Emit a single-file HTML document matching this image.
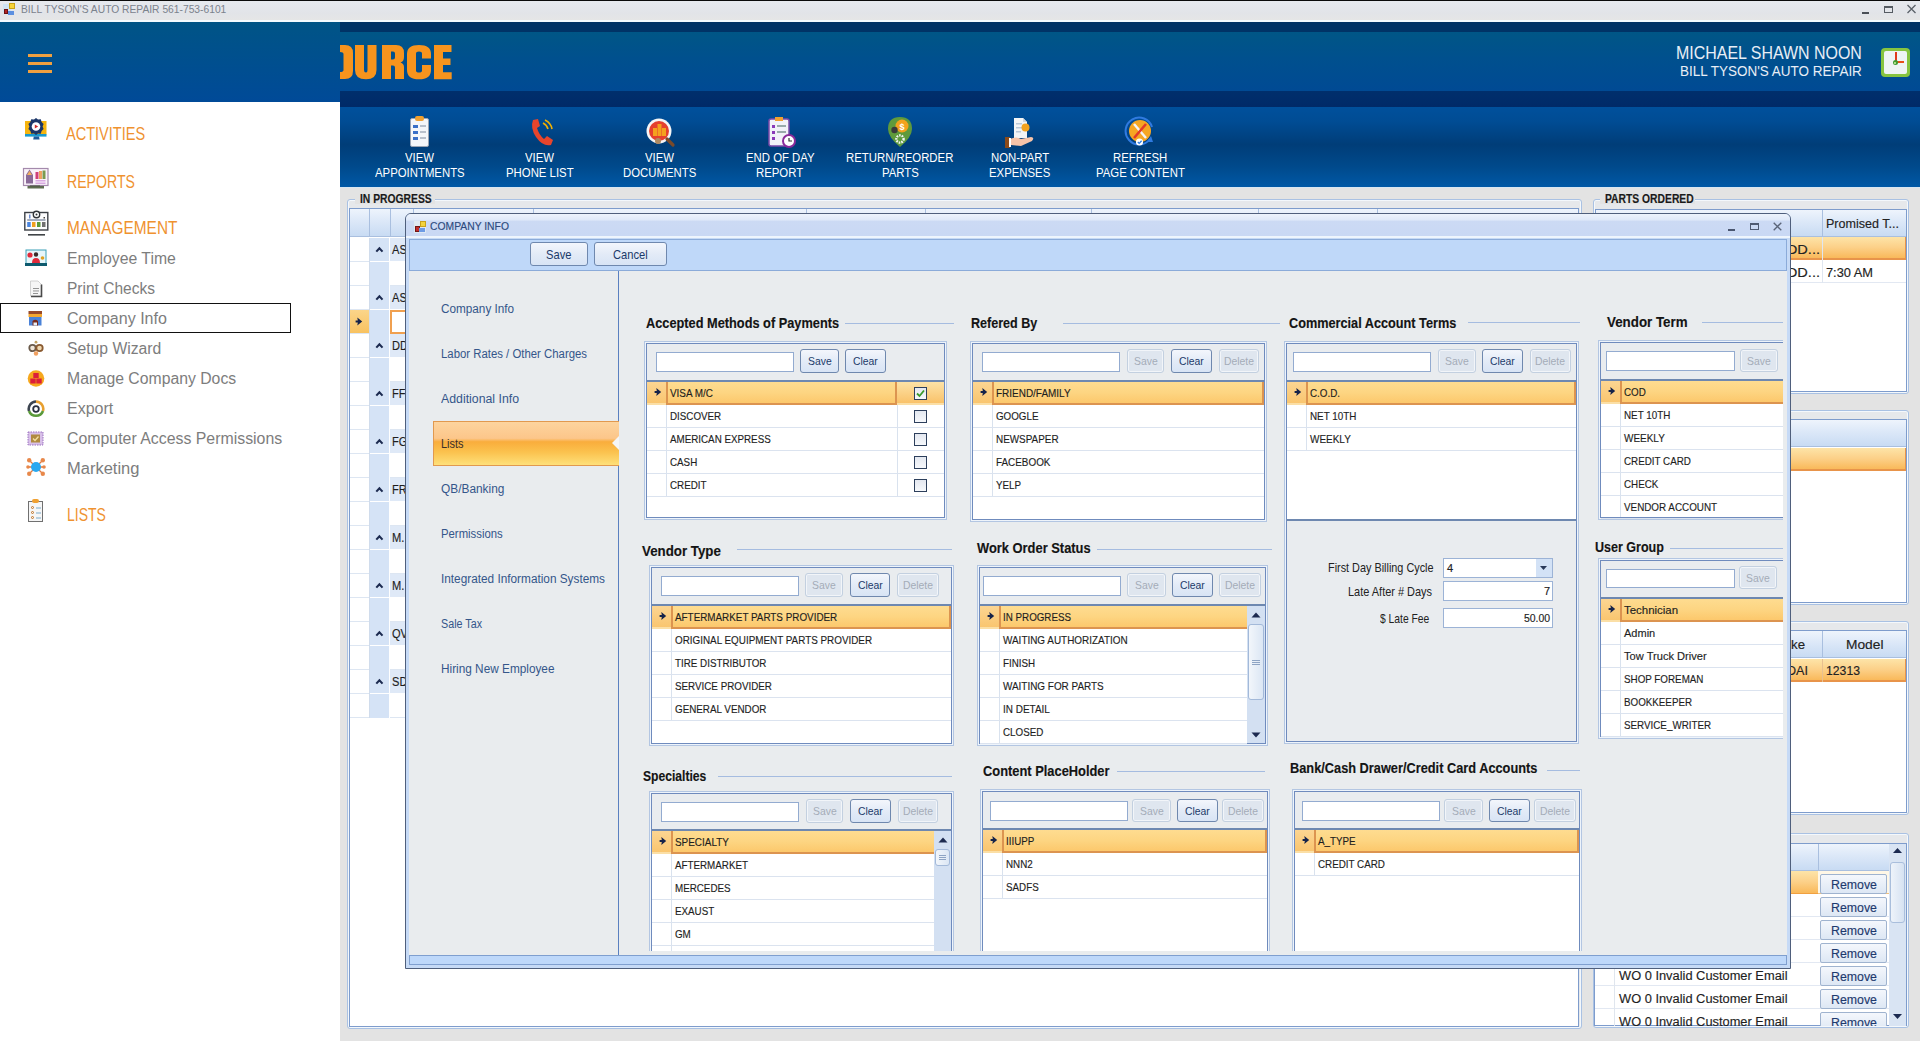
<!DOCTYPE html>
<html><head><meta charset="utf-8"><title>Company Info</title>
<style>
html,body{margin:0;padding:0;}
body{width:1920px;height:1041px;overflow:hidden;position:relative;background:#e4e4e4;font-family:"Liberation Sans",sans-serif;}
div,span,svg{position:absolute;box-sizing:border-box;}
.t{white-space:nowrap;line-height:1;-webkit-text-stroke:0.15px currentColor;}
</style></head><body>
<div style="left:0px;top:0px;width:1920px;height:1px;background:#0a0a0a"></div>
<div style="left:0px;top:1px;width:1920px;height:20px;background:linear-gradient(#e6e9ee,#e2e4e8 60%,#e6e6e6)"></div>
<div style="left:0px;top:20px;width:1920px;height:2px;background:#f4fbff"></div>
<div style="left:3px;top:4px;width:8px;height:8px;background:#cfe3f3"></div>
<div style="left:4px;top:9px;width:4px;height:5px;background:#b22222;border:1px solid #6a1010"></div>
<div style="left:9px;top:3px;width:6px;height:6px;background:#f5d33a;border:1px solid #c9a217"></div>
<div style="left:8px;top:11px;width:6px;height:4px;background:#5b8fe0"></div>
<span class="t" style="left:20.50px;top:4.10px;font-size:11.34px;color:#7b828c;transform:scaleX(0.9064);transform-origin:0 0;-webkit-text-stroke:0;">BILL TYSON&#x27;S AUTO REPAIR 561-753-6101</span>
<div style="left:1862px;top:12px;width:7px;height:2px;background:#4a4f56"></div>
<div style="left:1884px;top:6px;width:9px;height:7px;border:1px solid #555b62;border-top-width:2px"></div>
<svg style="left:1906px;top:4px" width="11" height="10" viewBox="0 0 11 10"><path d="M1.5 1 L9.5 9 M9.5 1 L1.5 9" stroke="#5a6068" stroke-width="1.3"/></svg>
<div style="left:0px;top:22px;width:340px;height:80px;background:linear-gradient(#005486,#004f8f 50%,#004a98)"></div>
<div style="left:28px;top:54px;width:24px;height:3px;background:#f0a040"></div>
<div style="left:28px;top:62px;width:24px;height:3px;background:#f0a040"></div>
<div style="left:28px;top:70px;width:24px;height:3px;background:#f0a040"></div>
<div style="left:340px;top:22px;width:1580px;height:10px;background:#003366"></div>
<div style="left:340px;top:32px;width:1580px;height:59px;background:linear-gradient(#005686,#00508e 45%,#004a94)"></div>
<div style="left:340px;top:91px;width:1580px;height:16px;background:linear-gradient(#002f6c,#002a68)"></div>
<div style="left:340px;top:107px;width:1580px;height:80px;background:linear-gradient(#00509c 0%,#004c94 18%,#003d78 47%,#004a8c 75%,#0058a6 100%)"></div>
<div style="left:340px;top:187px;width:1580px;height:1px;background:#d8e6f2"></div>
<svg style="left:340px;top:44px" width="114" height="36" viewBox="340 44 114 36"><path fill="#f7941d" fill-rule="evenodd" d="M340 45 H345 Q353 45 353 53 V71 Q353 79 345 79 H340 V72 Q343.5 72 343.5 70 V54 Q343.5 52 340 52 Z M355 45 H364 V70 Q364 72.5 366 72.5 Q367.5 72.5 367.5 70 V45 H376.5 V70 Q376.5 79.3 366 79.3 Q355 79.3 355 70 Z M382 45 H396 Q404 45 404 53 V57 Q404 61.5 400.5 62.5 Q404 63.5 404 67 V79 H395 V67.5 Q395 65.5 393 65.5 H391 V79 H382 Z M391 51.5 V59.5 H393 Q395 59.5 395 57.5 V53.5 Q395 51.5 393 51.5 Z M407 54 Q407 45 419 45 Q431 45 431 54 V58.5 H422 V53.5 Q422 51.5 419 51.5 Q416 51.5 416 53.5 V70.5 Q416 72.5 419 72.5 Q422 72.5 422 70.5 V65 H431 V70 Q431 79.3 419 79.3 Q407 79.3 407 70 Z M434 45 H451.5 V52 H443 V58.5 H450.5 V65 H443 V72.3 H451.7 V79.3 H434 Z"/></svg>
<span class="t" style="left:1676.00px;top:43.51px;font-size:18.17px;color:#e8eef6;transform:scaleX(0.8788);transform-origin:0 0;-webkit-text-stroke:0;">MICHAEL SHAWN NOON</span>
<span class="t" style="left:1680.00px;top:62.97px;font-size:15.26px;color:#e8eef6;transform:scaleX(0.8839);transform-origin:0 0;-webkit-text-stroke:0;">BILL TYSON&#x27;S AUTO REPAIR</span>
<div style="left:1881px;top:48px;width:29px;height:29px;background:#86c440;border-radius:4px"></div>
<div style="left:1884px;top:51px;width:23px;height:23px;background:#eef4f4;border-radius:2px"></div>
<div style="left:1895px;top:52px;width:2px;height:11px;background:#e03a1a"></div>
<div style="left:1896px;top:61px;width:8px;height:2px;background:#e8501a"></div>
<div style="left:1893px;top:60px;width:5px;height:5px;background:#3f9a2f;border-radius:50%"></div>
<div style="left:1894px;top:62px;width:2px;height:2px;background:#c8f0a0;border-radius:50%"></div>
<span class="t" style="left:405.48px;top:151.12px;font-size:13.08px;color:#ffffff;transform:scaleX(0.8690);transform-origin:0 0;-webkit-text-stroke:0;">VIEW</span>
<span class="t" style="left:375.16px;top:166.12px;font-size:13.08px;color:#ffffff;transform:scaleX(0.8690);transform-origin:0 0;-webkit-text-stroke:0;">APPOINTMENTS</span>
<span class="t" style="left:525.48px;top:151.12px;font-size:13.08px;color:#ffffff;transform:scaleX(0.8690);transform-origin:0 0;-webkit-text-stroke:0;">VIEW</span>
<span class="t" style="left:506.21px;top:166.12px;font-size:13.08px;color:#ffffff;transform:scaleX(0.8690);transform-origin:0 0;-webkit-text-stroke:0;">PHONE LIST</span>
<span class="t" style="left:645.48px;top:151.12px;font-size:13.08px;color:#ffffff;transform:scaleX(0.8690);transform-origin:0 0;-webkit-text-stroke:0;">VIEW</span>
<span class="t" style="left:623.37px;top:166.12px;font-size:13.08px;color:#ffffff;transform:scaleX(0.8690);transform-origin:0 0;-webkit-text-stroke:0;">DOCUMENTS</span>
<span class="t" style="left:745.69px;top:151.12px;font-size:13.08px;color:#ffffff;transform:scaleX(0.8690);transform-origin:0 0;-webkit-text-stroke:0;">END OF DAY</span>
<span class="t" style="left:756.42px;top:166.12px;font-size:13.08px;color:#ffffff;transform:scaleX(0.8690);transform-origin:0 0;-webkit-text-stroke:0;">REPORT</span>
<span class="t" style="left:846.32px;top:151.12px;font-size:13.08px;color:#ffffff;transform:scaleX(0.8690);transform-origin:0 0;-webkit-text-stroke:0;">RETURN/REORDER</span>
<span class="t" style="left:881.58px;top:166.12px;font-size:13.08px;color:#ffffff;transform:scaleX(0.8690);transform-origin:0 0;-webkit-text-stroke:0;">PARTS</span>
<span class="t" style="left:990.85px;top:151.12px;font-size:13.08px;color:#ffffff;transform:scaleX(0.8690);transform-origin:0 0;-webkit-text-stroke:0;">NON-PART</span>
<span class="t" style="left:989.36px;top:166.12px;font-size:13.08px;color:#ffffff;transform:scaleX(0.8690);transform-origin:0 0;-webkit-text-stroke:0;">EXPENSES</span>
<span class="t" style="left:1112.84px;top:151.12px;font-size:13.08px;color:#ffffff;transform:scaleX(0.8690);transform-origin:0 0;-webkit-text-stroke:0;">REFRESH</span>
<span class="t" style="left:1095.58px;top:166.12px;font-size:13.08px;color:#ffffff;transform:scaleX(0.8690);transform-origin:0 0;-webkit-text-stroke:0;">PAGE CONTENT</span>
<div style="left:410px;top:118px;width:19px;height:29px;background:#f4f6fa;border:1px solid #9aa4b4;border-radius:2px"></div>
<div style="left:415px;top:116px;width:9px;height:5px;background:#f0a030;border-radius:2px"></div>
<div style="left:413px;top:125px;width:5px;height:3px;background:#3a6fc8"></div>
<div style="left:420px;top:125px;width:6px;height:2px;background:#b8c0cc"></div>
<div style="left:413px;top:131px;width:5px;height:3px;background:#3a6fc8"></div>
<div style="left:420px;top:131px;width:6px;height:2px;background:#b8c0cc"></div>
<div style="left:413px;top:137px;width:5px;height:3px;background:#3a6fc8"></div>
<div style="left:420px;top:137px;width:6px;height:2px;background:#b8c0cc"></div>
<svg style="left:527px;top:117px" width="28" height="31" viewBox="0 0 28 31"><path d="M6 3 L11 2 L13 9 L10 11 Q12 18 17 22 L20 19 L26 23 L24 28 Q16 30 9 20 Q3 11 6 3Z" fill="#e8452c"/><path d="M16 6 Q20 8 21 12 M18 3 Q24 6 25 12" stroke="#f0b000" stroke-width="1.6" fill="none"/></svg>
<svg style="left:645px;top:116px" width="32" height="33" viewBox="0 0 32 33"><circle cx="14" cy="15" r="12.5" fill="#f6f6f6"/><circle cx="14" cy="15" r="10" fill="#e5402e"/><rect x="8" y="12" width="4" height="8" fill="#f4a21e"/><rect x="12.5" y="8" width="4" height="12" fill="#f4a21e"/><rect x="17" y="12" width="4" height="8" fill="#f4a21e"/><path d="M22 23 L28 29" stroke="#7a4a2a" stroke-width="3.2" stroke-linecap="round"/><circle cx="13" cy="25" r="3" fill="#b08a60"/></svg>
<svg style="left:766px;top:116px" width="32" height="33" viewBox="0 0 32 33"><rect x="3" y="3" width="20" height="27" rx="2" fill="#f2f2f8" stroke="#7a4aa8" stroke-width="1.5"/><rect x="9" y="1" width="8" height="4" fill="#f0a030"/><rect x="6" y="9" width="3" height="3" fill="#8a3ab8"/><rect x="11" y="9" width="9" height="2" fill="#9aa"/><rect x="6" y="15" width="3" height="3" fill="#8a3ab8"/><rect x="11" y="15" width="9" height="2" fill="#9aa"/><rect x="6" y="21" width="3" height="3" fill="#8a3ab8"/><circle cx="23" cy="25" r="6" fill="#fff" stroke="#8a2a9a" stroke-width="2"/><path d="M23 22 V25 H26" stroke="#333" stroke-width="1.2" fill="none"/></svg>
<svg style="left:887px;top:116px" width="26" height="32" viewBox="0 0 26 32"><path d="M13 1 Q25 1 25 13 Q25 21 13 31 Q1 21 1 13 Q1 1 13 1Z" fill="#5f9a3c"/><circle cx="15" cy="10" r="6.5" fill="#f2a21e"/><text x="15" y="13.5" font-size="9" font-family="Liberation Sans" font-weight="bold" fill="#fff" text-anchor="middle">$</text><circle cx="7.5" cy="14" r="3.2" fill="#3a3a3a"/><circle cx="13" cy="23" r="3.6" fill="none" stroke="#f4f4f4" stroke-width="2.4" stroke-dasharray="1.6 1"/></svg>
<svg style="left:1003px;top:116px" width="34" height="33" viewBox="0 0 34 33"><path d="M11 2 H20 L24 6 V22 H11Z" fill="#f2f4f6"/><path d="M20 2 V6 H24" fill="#cfd6dc"/><rect x="13" y="7" width="6" height="1.5" fill="#b9c8d8"/><rect x="13" y="11" width="8" height="1.5" fill="#b9c8d8"/><rect x="13" y="15" width="5" height="1.5" fill="#b9c8d8"/><circle cx="22.5" cy="11.5" r="4" fill="#f2a21e"/><path d="M7 23 Q13 20 18 23 L28 21 Q32 21.5 29 25 L18 30 L8 29Z" fill="#f6c3a8"/><rect x="2" y="21" width="5" height="11" fill="#8a4a1a"/><rect x="6" y="22" width="2" height="9" fill="#fff"/></svg>
<svg style="left:1124px;top:115px" width="32" height="33" viewBox="0 0 32 33"><path d="M26 24 A13.5 13.5 0 1 1 28 12" fill="none" stroke="#2f7ae0" stroke-width="2"/><path d="M23 27 L29 27 L27 21Z" fill="#2f7ae0"/><circle cx="16" cy="16" r="11" fill="#f6a623"/><path d="M10 9 L22 23" stroke="#f4f4f4" stroke-width="2.4"/><path d="M22 9 L10 23" stroke="#e23a2a" stroke-width="2.6"/><circle cx="15.5" cy="27" r="3.6" fill="#fff"/><path d="M13.8 27 L15.2 28.4 L17.6 25.8" stroke="#2f7ae0" stroke-width="1.3" fill="none"/></svg>
<div style="left:0px;top:102px;width:340px;height:939px;background:#ffffff"></div>
<svg style="left:20px;top:112px" width="32" height="32" viewBox="0 0 32 32"><rect x="5" y="9" width="21.5" height="13.5" fill="#f6b40e"/><rect x="5" y="22" width="21.5" height="2.6" fill="#1a9ad0"/><path d="M13.8 24.6 H19 L19.6 27.6 H13.2Z" fill="#1d5a9a"/><path d="M16 6 L18 7.5 L20.8 7.3 L21.6 10 L23.6 12 L22.6 14.5 L23.6 17 L21.6 19 L20.8 21.7 L18 21.5 L16 23 L14 21.5 L11.2 21.7 L10.4 19 L8.4 17 L9.4 14.5 L8.4 12 L10.4 10 L11.2 7.3 L14 7.5Z" fill="#1b3668"/><circle cx="16" cy="14.5" r="4.3" fill="#ffffff"/><path d="M14.8 12.4 L18.2 14.5 L14.8 16.6Z" fill="#d02a2a"/></svg>
<svg style="left:20px;top:162px" width="32" height="32" viewBox="0 0 32 32"><rect x="3.5" y="6.5" width="24.5" height="17" fill="#faf2fa" stroke="#a48aac" stroke-width="1.2"/><path d="M6 13 L9.5 7.5 L13 13 V21.5 H6Z" fill="#8a6a98"/><path d="M7 13 L9.5 9 L12 13Z" fill="#f2b060"/><rect x="15.5" y="10" width="3" height="7" fill="#d0407a"/><rect x="19" y="9" width="3" height="8" fill="#f0a060"/><rect x="22.5" y="8.5" width="3" height="8.5" fill="#7a9a50"/><rect x="15.5" y="18" width="10" height="1.5" fill="#d8a8e0"/><rect x="15.5" y="20.5" width="10" height="1.5" fill="#d8a8e0"/><rect x="7.5" y="24" width="16.5" height="2.5" fill="#5e6c50"/><rect x="10" y="23.5" width="10" height="1" fill="#4a5840"/></svg>
<svg style="left:20px;top:206px" width="32" height="32" viewBox="0 0 32 32"><rect x="4.8" y="6.5" width="23" height="17.5" fill="#fcfcfd" stroke="#3c4046" stroke-width="1.4"/><rect x="7.2" y="16" width="3.5" height="5" fill="#4a86e0"/><rect x="12" y="16" width="3.5" height="5" fill="#f0a020"/><rect x="17" y="16" width="3.5" height="5" fill="#5a9a3a"/><rect x="22" y="16" width="3.5" height="5" fill="#707070"/><rect x="7.2" y="13.5" width="18.3" height="1" fill="#506080"/><rect x="9" y="8.5" width="1.5" height="4" fill="#6a8ad0"/><rect x="23.5" y="11" width="1.5" height="1.5" fill="#404040"/><circle cx="16.5" cy="8.5" r="3.2" fill="#ffffff" stroke="#303438" stroke-width="1.4"/><circle cx="16.5" cy="8.5" r="1" fill="#303438"/><rect x="8" y="28" width="17" height="1.6" fill="#404448"/></svg>
<svg style="left:24px;top:248px" width="24" height="20" viewBox="0 0 24 20"><rect x="2" y="2" width="20" height="14" fill="#e6f6fa" stroke="#3aa0b8" stroke-width="1"/><circle cx="6" cy="7" r="2.6" fill="#e02a3a"/><circle cx="12" cy="6.5" r="2.2" fill="#3a2a2a"/><path d="M8 15 Q8 10 12 10 Q16 10 16 15Z" fill="#e02a3a"/><circle cx="18.5" cy="10" r="1.8" fill="#e0a020"/><rect x="1" y="15" width="22" height="3" fill="#0d5a6e"/></svg>
<svg style="left:28px;top:279px" width="16" height="19" viewBox="0 0 16 19"><path d="M2.5 2 H10 L13.5 5.5 V17 H2.5Z" fill="#f6f6f6" stroke="#c8c8c8" stroke-width="0.8"/><path d="M13.5 5.5 V17.5 H3" fill="none" stroke="#4a4a4a" stroke-width="1.6"/><rect x="5" y="9" width="6" height="0.9" fill="#8a8a8a"/><rect x="5" y="11.5" width="6" height="0.9" fill="#8a8a8a"/><rect x="5" y="14" width="5" height="0.9" fill="#8a8a8a"/></svg>
<svg style="left:28px;top:310px" width="15" height="17" viewBox="0 0 15 17"><rect x="0.5" y="1" width="13.5" height="3" fill="#9a4a28"/><rect x="0.5" y="4" width="13.5" height="3" fill="#f4a830"/><rect x="1" y="7" width="12.5" height="8.5" fill="#4a82d8"/><path d="M4.5 15.5 V11 Q7.25 8.5 10 11 V15.5Z" fill="#7a2a1a"/><rect x="5.5" y="12.5" width="3.5" height="3" fill="#e8f0f8"/></svg>
<svg style="left:28px;top:340px" width="16" height="17" viewBox="0 0 16 17"><circle cx="4.5" cy="8" r="3.2" fill="#f0e6d8" stroke="#6a5a4a" stroke-width="1.8"/><circle cx="11.5" cy="8" r="3.2" fill="#f0d8b0" stroke="#8a5a30" stroke-width="1.8"/><circle cx="8" cy="13.5" r="2.2" fill="#f0a060"/><circle cx="8" cy="2.2" r="1.4" fill="#c0a060"/></svg>
<svg style="left:27px;top:369px" width="18" height="19" viewBox="0 0 18 19"><circle cx="9" cy="9.5" r="8.3" fill="#f6a81e"/><rect x="6.3" y="4" width="5.4" height="5" fill="#dc1e3a"/><rect x="3.3" y="9.5" width="5.4" height="5" fill="#dc1e3a"/><rect x="9.3" y="9.5" width="5.4" height="5" fill="#dc1e3a"/></svg>
<svg style="left:27px;top:400px" width="18" height="18" viewBox="0 0 18 18"><path d="M9 1.5 A7.5 7.5 0 0 0 2 11" fill="none" stroke="#3c4450" stroke-width="2.6"/><path d="M9 1.5 A7.5 7.5 0 0 1 16 11" fill="none" stroke="#e8a030" stroke-width="2.6"/><path d="M2 11 A7.5 7.5 0 0 0 16 11" fill="none" stroke="#5a9a3a" stroke-width="2.6"/><circle cx="9" cy="9" r="2.8" fill="#fff" stroke="#2a3040" stroke-width="1.8"/></svg>
<svg style="left:27px;top:431px" width="17" height="15" viewBox="0 0 17 15"><rect x="1" y="1" width="15" height="13" fill="#d8c0e8" stroke="#9a70c0" stroke-width="1" stroke-dasharray="1.5 1"/><rect x="4" y="3.5" width="9" height="8" fill="#b08a40"/><path d="M6 7.5 L8 9.5 L11.5 5.5" stroke="#f4e0a0" stroke-width="1.3" fill="none"/></svg>
<svg style="left:26px;top:457px" width="20" height="20" viewBox="0 0 20 20"><path d="M3 3 L17 17 M17 3 L3 17 M1.5 10 H18.5" stroke="#e07a40" stroke-width="1.4"/><circle cx="3.2" cy="3.2" r="2.2" fill="#e8884a"/><circle cx="16.8" cy="3.2" r="2.2" fill="#e8884a"/><circle cx="3.2" cy="16.8" r="2.2" fill="#e8884a"/><circle cx="16.8" cy="16.8" r="2.2" fill="#e8884a"/><circle cx="2" cy="10" r="1.8" fill="#e8884a"/><circle cx="18" cy="10" r="1.8" fill="#e8884a"/><circle cx="10" cy="10" r="5" fill="#2aa8f0"/></svg>
<div style="left:28px;top:501px;width:15px;height:21px;background:#f6f6f6;border:1.5px solid #707070"></div>
<div style="left:32px;top:499px;width:7px;height:4px;background:#f0a030;border-radius:2px"></div>
<div style="left:31px;top:506px;width:3px;height:3px;border:1px solid #c07020;border-radius:50%"></div>
<div style="left:36px;top:507px;width:5px;height:2px;background:#b8d0e0"></div>
<div style="left:31px;top:511px;width:3px;height:3px;border:1px solid #c07020;border-radius:50%"></div>
<div style="left:36px;top:512px;width:5px;height:2px;background:#b8d0e0"></div>
<div style="left:31px;top:516px;width:3px;height:3px;border:1px solid #c07020;border-radius:50%"></div>
<div style="left:36px;top:517px;width:5px;height:2px;background:#b8d0e0"></div>
<span class="t" style="left:66.40px;top:126.18px;font-size:17.73px;color:#ef922f;transform:scaleX(0.8202);transform-origin:0 0;-webkit-text-stroke:0;">ACTIVITIES</span>
<span class="t" style="left:67.00px;top:173.68px;font-size:17.73px;color:#ef922f;transform:scaleX(0.7963);transform-origin:0 0;-webkit-text-stroke:0;">REPORTS</span>
<span class="t" style="left:67.00px;top:220.38px;font-size:17.73px;color:#ef922f;transform:scaleX(0.8695);transform-origin:0 0;-webkit-text-stroke:0;">MANAGEMENT</span>
<span class="t" style="left:67.10px;top:250.25px;font-size:17.30px;color:#7d7d7d;transform:scaleX(0.9144);transform-origin:0 0;-webkit-text-stroke:0;">Employee Time</span>
<span class="t" style="left:67.10px;top:280.25px;font-size:17.30px;color:#7d7d7d;transform:scaleX(0.8975);transform-origin:0 0;-webkit-text-stroke:0;">Print Checks</span>
<span class="t" style="left:67.10px;top:310.25px;font-size:17.30px;color:#7d7d7d;transform:scaleX(0.9287);transform-origin:0 0;-webkit-text-stroke:0;">Company Info</span>
<span class="t" style="left:67.10px;top:340.25px;font-size:17.30px;color:#7d7d7d;transform:scaleX(0.9093);transform-origin:0 0;-webkit-text-stroke:0;">Setup Wizard</span>
<span class="t" style="left:67.10px;top:370.25px;font-size:17.30px;color:#7d7d7d;transform:scaleX(0.9124);transform-origin:0 0;-webkit-text-stroke:0;">Manage Company Docs</span>
<span class="t" style="left:67.10px;top:400.25px;font-size:17.30px;color:#7d7d7d;transform:scaleX(0.9262);transform-origin:0 0;-webkit-text-stroke:0;">Export</span>
<span class="t" style="left:67.10px;top:430.25px;font-size:17.30px;color:#7d7d7d;transform:scaleX(0.9184);transform-origin:0 0;-webkit-text-stroke:0;">Computer Access Permissions</span>
<span class="t" style="left:67.10px;top:460.25px;font-size:17.30px;color:#7d7d7d;transform:scaleX(0.9547);transform-origin:0 0;-webkit-text-stroke:0;">Marketing</span>
<span class="t" style="left:67.00px;top:506.58px;font-size:17.73px;color:#ef922f;transform:scaleX(0.7915);transform-origin:0 0;-webkit-text-stroke:0;">LISTS</span>
<div style="left:0px;top:303px;width:291px;height:30px;border:1px solid #111"></div>
<div style="left:340px;top:188px;width:1580px;height:853px;background:#e3e3e3"></div>
<div style="left:347px;top:199px;width:1235px;height:830px;border:1px solid #a9c1e3;box-shadow:inset 0 0 0 1px #f4f8fc;border-radius:3px;background:#e6e8eb"></div>
<div style="left:355px;top:190px;width:80px;height:14px;background:#e3e3e3"></div>
<span class="t" style="left:359.50px;top:193.19px;font-size:12.00px;font-weight:bold;color:#1a1a1a;transform:scaleX(0.8600);transform-origin:0 0;">IN PROGRESS</span>
<div style="left:349px;top:208px;width:1230px;height:819px;background:#ffffff;border:1px solid #7e9ccc"></div>
<div style="left:350px;top:209px;width:1228px;height:28px;background:linear-gradient(#eef4fc,#dce8f8 45%,#c8dbf3);border-bottom:1px solid #a9bfdf"></div>
<div style="left:369px;top:209px;width:1px;height:28px;background:#a9bfdf"></div>
<div style="left:390px;top:209px;width:1px;height:28px;background:#a9bfdf"></div>
<div style="left:413px;top:209px;width:1px;height:28px;background:#a9bfdf"></div>
<div style="left:533px;top:209px;width:1px;height:28px;background:#a9bfdf"></div>
<div style="left:806px;top:209px;width:1px;height:28px;background:#a9bfdf"></div>
<div style="left:925px;top:209px;width:1px;height:28px;background:#a9bfdf"></div>
<div style="left:1091px;top:209px;width:1px;height:28px;background:#a9bfdf"></div>
<div style="left:1258px;top:209px;width:1px;height:28px;background:#a9bfdf"></div>
<div style="left:1377px;top:209px;width:1px;height:28px;background:#a9bfdf"></div>
<div style="left:350px;top:238px;width:20px;height:24px;border-bottom:1px solid #dde6f2"></div>
<div style="left:370px;top:238px;width:20px;height:48px;background:#d5e3f6;border-right:1px solid #fff"></div>
<div style="left:390px;top:238px;width:1188px;height:24px;background:#dfe9f7;border-bottom:1px solid #fff"></div>
<div style="left:350px;top:262px;width:20px;height:24px;border-bottom:1px solid #dde6f2"></div>
<div style="left:390px;top:262px;width:1188px;height:24px;border-bottom:1px solid #dde6f2"></div>
<div style="left:370px;top:261px;width:20px;height:1px;background:#ffffff"></div>
<svg style="left:375px;top:246px" width="9" height="7" viewBox="0 0 9 7"><path d="M1.3 5.6 L4.4 2.3 L7.5 5.6" stroke="#1c2a50" stroke-width="2.1" fill="none"/></svg>
<span class="t" style="left:392.00px;top:244.44px;font-size:12.30px;color:#1e1e1e;transform:scaleX(0.9000);transform-origin:0 0;">AS</span>
<div style="left:350px;top:286px;width:20px;height:24px;border-bottom:1px solid #dde6f2"></div>
<div style="left:370px;top:286px;width:20px;height:48px;background:#d5e3f6;border-right:1px solid #fff"></div>
<div style="left:390px;top:286px;width:1188px;height:24px;background:#dfe9f7;border-bottom:1px solid #fff"></div>
<div style="left:350px;top:310px;width:20px;height:24px;border-bottom:1px solid #dde6f2"></div>
<div style="left:390px;top:310px;width:1188px;height:24px;border-bottom:1px solid #dde6f2"></div>
<div style="left:370px;top:309px;width:20px;height:1px;background:#ffffff"></div>
<svg style="left:375px;top:294px" width="9" height="7" viewBox="0 0 9 7"><path d="M1.3 5.6 L4.4 2.3 L7.5 5.6" stroke="#1c2a50" stroke-width="2.1" fill="none"/></svg>
<span class="t" style="left:392.00px;top:292.44px;font-size:12.30px;color:#1e1e1e;transform:scaleX(0.9000);transform-origin:0 0;">AS</span>
<div style="left:350px;top:334px;width:20px;height:24px;border-bottom:1px solid #dde6f2"></div>
<div style="left:370px;top:334px;width:20px;height:48px;background:#d5e3f6;border-right:1px solid #fff"></div>
<div style="left:390px;top:334px;width:1188px;height:24px;background:#dfe9f7;border-bottom:1px solid #fff"></div>
<div style="left:350px;top:358px;width:20px;height:24px;border-bottom:1px solid #dde6f2"></div>
<div style="left:390px;top:358px;width:1188px;height:24px;border-bottom:1px solid #dde6f2"></div>
<div style="left:370px;top:357px;width:20px;height:1px;background:#ffffff"></div>
<svg style="left:375px;top:342px" width="9" height="7" viewBox="0 0 9 7"><path d="M1.3 5.6 L4.4 2.3 L7.5 5.6" stroke="#1c2a50" stroke-width="2.1" fill="none"/></svg>
<span class="t" style="left:392.00px;top:340.44px;font-size:12.30px;color:#1e1e1e;transform:scaleX(0.9000);transform-origin:0 0;">DD</span>
<div style="left:350px;top:382px;width:20px;height:24px;border-bottom:1px solid #dde6f2"></div>
<div style="left:370px;top:382px;width:20px;height:48px;background:#d5e3f6;border-right:1px solid #fff"></div>
<div style="left:390px;top:382px;width:1188px;height:24px;background:#dfe9f7;border-bottom:1px solid #fff"></div>
<div style="left:350px;top:406px;width:20px;height:24px;border-bottom:1px solid #dde6f2"></div>
<div style="left:390px;top:406px;width:1188px;height:24px;border-bottom:1px solid #dde6f2"></div>
<div style="left:370px;top:405px;width:20px;height:1px;background:#ffffff"></div>
<svg style="left:375px;top:390px" width="9" height="7" viewBox="0 0 9 7"><path d="M1.3 5.6 L4.4 2.3 L7.5 5.6" stroke="#1c2a50" stroke-width="2.1" fill="none"/></svg>
<span class="t" style="left:392.00px;top:388.44px;font-size:12.30px;color:#1e1e1e;transform:scaleX(0.9000);transform-origin:0 0;">FF</span>
<div style="left:350px;top:430px;width:20px;height:24px;border-bottom:1px solid #dde6f2"></div>
<div style="left:370px;top:430px;width:20px;height:48px;background:#d5e3f6;border-right:1px solid #fff"></div>
<div style="left:390px;top:430px;width:1188px;height:24px;background:#dfe9f7;border-bottom:1px solid #fff"></div>
<div style="left:350px;top:454px;width:20px;height:24px;border-bottom:1px solid #dde6f2"></div>
<div style="left:390px;top:454px;width:1188px;height:24px;border-bottom:1px solid #dde6f2"></div>
<div style="left:370px;top:453px;width:20px;height:1px;background:#ffffff"></div>
<svg style="left:375px;top:438px" width="9" height="7" viewBox="0 0 9 7"><path d="M1.3 5.6 L4.4 2.3 L7.5 5.6" stroke="#1c2a50" stroke-width="2.1" fill="none"/></svg>
<span class="t" style="left:392.00px;top:436.44px;font-size:12.30px;color:#1e1e1e;transform:scaleX(0.9000);transform-origin:0 0;">FG</span>
<div style="left:350px;top:478px;width:20px;height:24px;border-bottom:1px solid #dde6f2"></div>
<div style="left:370px;top:478px;width:20px;height:48px;background:#d5e3f6;border-right:1px solid #fff"></div>
<div style="left:390px;top:478px;width:1188px;height:24px;background:#dfe9f7;border-bottom:1px solid #fff"></div>
<div style="left:350px;top:502px;width:20px;height:24px;border-bottom:1px solid #dde6f2"></div>
<div style="left:390px;top:502px;width:1188px;height:24px;border-bottom:1px solid #dde6f2"></div>
<div style="left:370px;top:501px;width:20px;height:1px;background:#ffffff"></div>
<svg style="left:375px;top:486px" width="9" height="7" viewBox="0 0 9 7"><path d="M1.3 5.6 L4.4 2.3 L7.5 5.6" stroke="#1c2a50" stroke-width="2.1" fill="none"/></svg>
<span class="t" style="left:392.00px;top:484.44px;font-size:12.30px;color:#1e1e1e;transform:scaleX(0.9000);transform-origin:0 0;">FR</span>
<div style="left:350px;top:526px;width:20px;height:24px;border-bottom:1px solid #dde6f2"></div>
<div style="left:370px;top:526px;width:20px;height:48px;background:#d5e3f6;border-right:1px solid #fff"></div>
<div style="left:390px;top:526px;width:1188px;height:24px;background:#dfe9f7;border-bottom:1px solid #fff"></div>
<div style="left:350px;top:550px;width:20px;height:24px;border-bottom:1px solid #dde6f2"></div>
<div style="left:390px;top:550px;width:1188px;height:24px;border-bottom:1px solid #dde6f2"></div>
<div style="left:370px;top:549px;width:20px;height:1px;background:#ffffff"></div>
<svg style="left:375px;top:534px" width="9" height="7" viewBox="0 0 9 7"><path d="M1.3 5.6 L4.4 2.3 L7.5 5.6" stroke="#1c2a50" stroke-width="2.1" fill="none"/></svg>
<span class="t" style="left:392.00px;top:532.44px;font-size:12.30px;color:#1e1e1e;transform:scaleX(0.9000);transform-origin:0 0;">M.</span>
<div style="left:350px;top:574px;width:20px;height:24px;border-bottom:1px solid #dde6f2"></div>
<div style="left:370px;top:574px;width:20px;height:48px;background:#d5e3f6;border-right:1px solid #fff"></div>
<div style="left:390px;top:574px;width:1188px;height:24px;background:#dfe9f7;border-bottom:1px solid #fff"></div>
<div style="left:350px;top:598px;width:20px;height:24px;border-bottom:1px solid #dde6f2"></div>
<div style="left:390px;top:598px;width:1188px;height:24px;border-bottom:1px solid #dde6f2"></div>
<div style="left:370px;top:597px;width:20px;height:1px;background:#ffffff"></div>
<svg style="left:375px;top:582px" width="9" height="7" viewBox="0 0 9 7"><path d="M1.3 5.6 L4.4 2.3 L7.5 5.6" stroke="#1c2a50" stroke-width="2.1" fill="none"/></svg>
<span class="t" style="left:392.00px;top:580.44px;font-size:12.30px;color:#1e1e1e;transform:scaleX(0.9000);transform-origin:0 0;">M.</span>
<div style="left:350px;top:622px;width:20px;height:24px;border-bottom:1px solid #dde6f2"></div>
<div style="left:370px;top:622px;width:20px;height:48px;background:#d5e3f6;border-right:1px solid #fff"></div>
<div style="left:390px;top:622px;width:1188px;height:24px;background:#dfe9f7;border-bottom:1px solid #fff"></div>
<div style="left:350px;top:646px;width:20px;height:24px;border-bottom:1px solid #dde6f2"></div>
<div style="left:390px;top:646px;width:1188px;height:24px;border-bottom:1px solid #dde6f2"></div>
<div style="left:370px;top:645px;width:20px;height:1px;background:#ffffff"></div>
<svg style="left:375px;top:630px" width="9" height="7" viewBox="0 0 9 7"><path d="M1.3 5.6 L4.4 2.3 L7.5 5.6" stroke="#1c2a50" stroke-width="2.1" fill="none"/></svg>
<span class="t" style="left:392.00px;top:628.44px;font-size:12.30px;color:#1e1e1e;transform:scaleX(0.9000);transform-origin:0 0;">QV</span>
<div style="left:350px;top:670px;width:20px;height:24px;border-bottom:1px solid #dde6f2"></div>
<div style="left:370px;top:670px;width:20px;height:48px;background:#d5e3f6;border-right:1px solid #fff"></div>
<div style="left:390px;top:670px;width:1188px;height:24px;background:#dfe9f7;border-bottom:1px solid #fff"></div>
<div style="left:350px;top:694px;width:20px;height:24px;border-bottom:1px solid #dde6f2"></div>
<div style="left:390px;top:694px;width:1188px;height:24px;border-bottom:1px solid #dde6f2"></div>
<div style="left:370px;top:693px;width:20px;height:1px;background:#ffffff"></div>
<svg style="left:375px;top:678px" width="9" height="7" viewBox="0 0 9 7"><path d="M1.3 5.6 L4.4 2.3 L7.5 5.6" stroke="#1c2a50" stroke-width="2.1" fill="none"/></svg>
<span class="t" style="left:392.00px;top:676.44px;font-size:12.30px;color:#1e1e1e;transform:scaleX(0.9000);transform-origin:0 0;">SD</span>
<div style="left:369px;top:238px;width:1px;height:480px;background:#d0dcec"></div>
<div style="left:350px;top:310px;width:19px;height:23px;background:linear-gradient(#fbd58a,#f8c260)"></div>
<svg style="left:354px;top:316px" width="11" height="11" viewBox="0 0 11 11"><path d="M1.6 4.5 H3.8 L3.3 1.5 L8.2 5.5 L3.3 9.5 L3.8 6.5 H1.6 Z" fill="#15234a"/></svg>
<div style="left:390px;top:310px;width:20px;height:24px;border:2px solid #f0a050;background:#fff"></div>
<div style="left:1593px;top:199px;width:316px;height:195px;border:1px solid #a9c1e3;box-shadow:inset 0 0 0 1px #f4f8fc;border-radius:3px;background:#e6e8eb"></div>
<div style="left:1595px;top:209px;width:312px;height:183px;background:#fff;border:1px solid #7e9ccc"></div>
<div style="left:1596px;top:210px;width:310px;height:27px;background:linear-gradient(#eef4fc,#dce8f8 45%,#c8dbf3);border-bottom:1px solid #a9bfdf"></div>
<div style="left:1822px;top:210px;width:1px;height:27px;background:#a9bfdf"></div>
<div style="left:1596px;top:237px;width:310px;height:23px;background:linear-gradient(#fde4a8,#fcd088 50%,#f9b95a);border-bottom:2px solid #e8944a;border-right:1px solid #e8944a"></div>
<div style="left:1600px;top:190px;width:95px;height:14px;background:#e3e3e3"></div>
<span class="t" style="left:1604.50px;top:193.19px;font-size:12.00px;font-weight:bold;color:#1a1a1a;transform:scaleX(0.8600);transform-origin:0 0;">PARTS ORDERED</span>
<div style="left:1596px;top:260px;width:310px;height:23px;border-bottom:1px solid #e2e8f2"></div>
<div style="left:1822px;top:237px;width:1px;height:46px;background:#dfe6f0"></div>
<span class="t" style="left:1826.00px;top:217.47px;font-size:13.37px;color:#222;transform:scaleX(0.9387);transform-origin:0 0;">Promised  T...</span>
<span class="t" style="left:1826.00px;top:265.82px;font-size:13.08px;color:#222;transform:scaleX(0.9793);transform-origin:0 0;">7:30 AM</span>
<span class="t" style="left:1786.00px;top:242.82px;font-size:13.08px;color:#222;transform:scaleX(1.1138);transform-origin:0 0;">OD...</span>
<span class="t" style="left:1786.00px;top:265.82px;font-size:13.08px;color:#222;transform:scaleX(1.1138);transform-origin:0 0;">OD...</span>
<div style="left:1593px;top:410px;width:316px;height:195px;border:1px solid #a9c1e3;box-shadow:inset 0 0 0 1px #f4f8fc;border-radius:3px;background:#e6e8eb"></div>
<div style="left:1595px;top:419px;width:312px;height:184px;background:#fff;border:1px solid #7e9ccc"></div>
<div style="left:1596px;top:420px;width:310px;height:27px;background:linear-gradient(#eef4fc,#dce8f8 45%,#c8dbf3);border-bottom:1px solid #a9bfdf"></div>
<div style="left:1596px;top:448px;width:310px;height:23px;background:linear-gradient(#fde4a8,#fcd088 50%,#f9b95a);border-bottom:2px solid #e8944a;border-right:1px solid #e8944a"></div>
<div style="left:1593px;top:621px;width:316px;height:194px;border:1px solid #a9c1e3;box-shadow:inset 0 0 0 1px #f4f8fc;border-radius:3px;background:#e6e8eb"></div>
<div style="left:1595px;top:630px;width:312px;height:183px;background:#fff;border:1px solid #7e9ccc"></div>
<div style="left:1596px;top:631px;width:310px;height:27px;background:linear-gradient(#eef4fc,#dce8f8 45%,#c8dbf3);border-bottom:1px solid #a9bfdf"></div>
<div style="left:1822px;top:631px;width:1px;height:27px;background:#a9bfdf"></div>
<div style="left:1596px;top:659px;width:310px;height:23px;background:linear-gradient(#fde4a8,#fcd088 50%,#f9b95a);border-bottom:2px solid #e8944a;border-right:1px solid #e8944a"></div>
<div style="left:1822px;top:659px;width:1px;height:23px;background:#e8c090"></div>
<span class="t" style="left:1846.00px;top:638.25px;font-size:13.52px;color:#222;transform:scaleX(1.0186);transform-origin:0 0;">Model</span>
<span class="t" style="left:1791.00px;top:638.25px;font-size:13.52px;color:#222;transform:scaleX(0.9806);transform-origin:0 0;">ke</span>
<span class="t" style="left:1787.00px;top:664.32px;font-size:13.08px;color:#222;transform:scaleX(0.9630);transform-origin:0 0;">DAI</span>
<span class="t" style="left:1826.40px;top:664.32px;font-size:13.08px;color:#222;transform:scaleX(0.9347);transform-origin:0 0;">12313</span>
<div style="left:1593px;top:833px;width:316px;height:195px;border:1px solid #a9c1e3;box-shadow:inset 0 0 0 1px #f4f8fc;border-radius:3px;background:#e6e8eb"></div>
<div style="left:1594px;top:843px;width:313px;height:183px;background:#fff;border:1px solid #7e9ccc"></div>
<div style="left:1595px;top:844px;width:294px;height:27px;background:linear-gradient(#eef4fc,#dce8f8 45%,#c8dbf3);border-bottom:1px solid #a9bfdf"></div>
<div style="left:1818px;top:844px;width:1px;height:27px;background:#a9bfdf"></div>
<div style="left:0;top:0;width:1920px;height:1041px;clip-path:inset(844px 14px 15px 1594px)">
<div style="left:1595px;top:871px;width:223px;height:23px;background:linear-gradient(#fde4a8,#fcd088 50%,#f9b95a);border-bottom:1px solid #f0a040"></div>
<div style="left:1818px;top:871px;width:71px;height:23px;background:#fff7e6;border-bottom:1px solid #f0c080"></div>
<div style="left:1820px;top:874px;width:67px;height:20px;background:linear-gradient(#f4f7fc,#dde7f4);border:1px solid #9fb3cf;border-radius:2px"></div>
<span class="t" style="left:1830.50px;top:878.12px;font-size:13.08px;color:#1e3a6e;transform:scaleX(0.9444);transform-origin:0 0;">Remove</span>
<div style="left:1595px;top:916px;width:294px;height:1px;background:#e2e8f2"></div>
<div style="left:1820px;top:897px;width:67px;height:20px;background:linear-gradient(#f4f7fc,#dde7f4);border:1px solid #9fb3cf;border-radius:2px"></div>
<span class="t" style="left:1830.50px;top:901.12px;font-size:13.08px;color:#1e3a6e;transform:scaleX(0.9444);transform-origin:0 0;">Remove</span>
<div style="left:1595px;top:939px;width:294px;height:1px;background:#e2e8f2"></div>
<div style="left:1820px;top:920px;width:67px;height:20px;background:linear-gradient(#f4f7fc,#dde7f4);border:1px solid #9fb3cf;border-radius:2px"></div>
<span class="t" style="left:1830.50px;top:924.12px;font-size:13.08px;color:#1e3a6e;transform:scaleX(0.9444);transform-origin:0 0;">Remove</span>
<div style="left:1595px;top:962px;width:294px;height:1px;background:#e2e8f2"></div>
<div style="left:1820px;top:943px;width:67px;height:20px;background:linear-gradient(#f4f7fc,#dde7f4);border:1px solid #9fb3cf;border-radius:2px"></div>
<span class="t" style="left:1830.50px;top:947.12px;font-size:13.08px;color:#1e3a6e;transform:scaleX(0.9444);transform-origin:0 0;">Remove</span>
<div style="left:1595px;top:985px;width:294px;height:1px;background:#e2e8f2"></div>
<div style="left:1820px;top:966px;width:67px;height:20px;background:linear-gradient(#f4f7fc,#dde7f4);border:1px solid #9fb3cf;border-radius:2px"></div>
<span class="t" style="left:1830.50px;top:970.12px;font-size:13.08px;color:#1e3a6e;transform:scaleX(0.9444);transform-origin:0 0;">Remove</span>
<span class="t" style="left:1619.30px;top:969.15px;font-size:13.52px;color:#1e1e1e;transform:scaleX(0.9505);transform-origin:0 0;">WO 0 Invalid Customer Email</span>
<div style="left:1595px;top:1008px;width:294px;height:1px;background:#e2e8f2"></div>
<div style="left:1820px;top:989px;width:67px;height:20px;background:linear-gradient(#f4f7fc,#dde7f4);border:1px solid #9fb3cf;border-radius:2px"></div>
<span class="t" style="left:1830.50px;top:993.12px;font-size:13.08px;color:#1e3a6e;transform:scaleX(0.9444);transform-origin:0 0;">Remove</span>
<span class="t" style="left:1619.30px;top:992.15px;font-size:13.52px;color:#1e1e1e;transform:scaleX(0.9505);transform-origin:0 0;">WO 0 Invalid Customer Email</span>
<div style="left:1595px;top:1031px;width:294px;height:1px;background:#e2e8f2"></div>
<div style="left:1820px;top:1012px;width:67px;height:20px;background:linear-gradient(#f4f7fc,#dde7f4);border:1px solid #9fb3cf;border-radius:2px"></div>
<span class="t" style="left:1830.50px;top:1016.12px;font-size:13.08px;color:#1e3a6e;transform:scaleX(0.9444);transform-origin:0 0;">Remove</span>
<span class="t" style="left:1619.30px;top:1015.15px;font-size:13.52px;color:#1e1e1e;transform:scaleX(0.9505);transform-origin:0 0;">WO 0 Invalid Customer Email</span>
<div style="left:1614px;top:871px;width:1px;height:155px;background:#e0e6ee"></div>
</div>
<div style="left:1889px;top:844px;width:17px;height:182px;background:#d9e4f3"></div>
<svg style="left:1892px;top:847px" width="11" height="7" viewBox="0 0 11 7"><path d="M1 6 L5.5 1 L10 6Z" fill="#1c2a50"/></svg>
<svg style="left:1892px;top:1013px" width="11" height="7" viewBox="0 0 11 7"><path d="M1 1 L5.5 6 L10 1Z" fill="#1c2a50"/></svg>
<div style="left:1890px;top:862px;width:15px;height:61px;background:linear-gradient(90deg,#eef3fa,#d6e2f2);border:1px solid #a9bedc;border-radius:3px"></div>
<div style="left:405px;top:213px;width:1386px;height:756px;background:#c6daf6;border:1px solid #4f5f7c;border-radius:6px 6px 0 0"></div>
<div style="left:406px;top:214px;width:1384px;height:24px;background:linear-gradient(#edf3fc 0%,#dfe9f9 25%,#ccdaf4 30%,#c9d8f4 90%,#dae6f8 100%);border-radius:5px 5px 0 0"></div>
<div style="left:406px;top:236px;width:1384px;height:2px;background:#eef5fd"></div>
<div style="left:414px;top:221px;width:12px;height:12px;background:#dfe9f3"></div>
<div style="left:415px;top:226px;width:5px;height:6px;background:#c22a2a;border:1px solid #701818"></div>
<div style="left:420px;top:221px;width:6px;height:6px;background:#f3d33c;border:1px solid #c9a11a"></div>
<div style="left:419px;top:228px;width:6px;height:4px;background:#6d9be4"></div>
<span class="t" style="left:430.00px;top:221.40px;font-size:11.34px;color:#2c4a7e;transform:scaleX(0.9132);transform-origin:0 0;">COMPANY INFO</span>
<div style="left:1728px;top:229px;width:7px;height:2px;background:#4a5670"></div>
<div style="left:1750px;top:223px;width:9px;height:7px;border:1px solid #4f5a72;border-top-width:2px"></div>
<svg style="left:1773px;top:222px" width="9" height="9" viewBox="0 0 9 9"><path d="M0.7 0.7 L8.3 8.3 M8.3 0.7 L0.7 8.3" stroke="#5a6478" stroke-width="1.3"/></svg>
<div style="left:409px;top:239px;width:1378px;height:32px;background:#bfd8f9;border:1px solid #8babd9"></div>
<div style="left:530px;top:242px;width:58px;height:24px;background:linear-gradient(#f3f6fc,#e3ebf7 50%,#d8e4f5);border:1px solid #6f88ae;border-radius:3px;"></div>
<span class="t" style="left:546.28px;top:248.93px;font-size:12.40px;color:#1b3a6a;transform:scaleX(0.9000);transform-origin:0 0;-webkit-text-stroke:0;">Save</span>
<div style="left:594px;top:242px;width:73px;height:24px;background:linear-gradient(#f3f6fc,#e3ebf7 50%,#d8e4f5);border:1px solid #6f88ae;border-radius:3px;"></div>
<span class="t" style="left:613.13px;top:248.93px;font-size:12.40px;color:#1b3a6a;transform:scaleX(0.9000);transform-origin:0 0;-webkit-text-stroke:0;">Cancel</span>
<div style="left:409px;top:271px;width:1378px;height:684px;background:#e9ecee"></div>
<div style="left:409px;top:955px;width:1378px;height:10px;background:#bed8fa;border:1px solid #7f9fcf"></div>
<div style="left:618px;top:271px;width:1px;height:684px;background:#5a80c0"></div>
<div style="left:433px;top:421px;width:186px;height:45px;background:linear-gradient(#fdd49e 0%,#fcc68a 38%,#f9ad3c 46%,#fbc24e 70%,#fee07a 100%);border:1px solid #e1994f;border-right:0"></div>
<svg style="left:612px;top:436px" width="7" height="14" viewBox="0 0 7 14"><path d="M7 0 L0 7 L7 14Z" fill="#f4f6f8"/></svg>
<span class="t" style="left:440.50px;top:303.21px;font-size:12.50px;color:#34568a;transform:scaleX(0.9393);transform-origin:0 0;-webkit-text-stroke:0;">Company Info</span>
<span class="t" style="left:440.50px;top:348.21px;font-size:12.50px;color:#34568a;transform:scaleX(0.9097);transform-origin:0 0;-webkit-text-stroke:0;">Labor Rates / Other Charges</span>
<span class="t" style="left:440.50px;top:393.21px;font-size:12.50px;color:#34568a;transform:scaleX(0.9845);transform-origin:0 0;-webkit-text-stroke:0;">Additional Info</span>
<span class="t" style="left:440.50px;top:438.11px;font-size:12.50px;color:#3a2e2a;transform:scaleX(0.8793);transform-origin:0 0;-webkit-text-stroke:0;">Lists</span>
<span class="t" style="left:440.50px;top:482.91px;font-size:12.50px;color:#34568a;transform:scaleX(0.9504);transform-origin:0 0;-webkit-text-stroke:0;">QB/Banking</span>
<span class="t" style="left:440.50px;top:527.71px;font-size:12.50px;color:#34568a;transform:scaleX(0.9064);transform-origin:0 0;-webkit-text-stroke:0;">Permissions</span>
<span class="t" style="left:440.50px;top:572.71px;font-size:12.50px;color:#34568a;transform:scaleX(0.9442);transform-origin:0 0;-webkit-text-stroke:0;">Integrated Information Systems</span>
<span class="t" style="left:440.50px;top:617.51px;font-size:12.50px;color:#34568a;transform:scaleX(0.8592);transform-origin:0 0;-webkit-text-stroke:0;">Sale Tax</span>
<span class="t" style="left:440.50px;top:662.61px;font-size:12.50px;color:#34568a;transform:scaleX(0.9444);transform-origin:0 0;-webkit-text-stroke:0;">Hiring New Employee</span>
<div style="left:0;top:0;width:1920px;height:1041px;clip-path:inset(271px 137px 90px 619px)">
<span class="t" style="left:645.70px;top:315.79px;font-size:14.53px;font-weight:bold;color:#141414;transform:scaleX(0.8799);transform-origin:0 0;">Accepted Methods of Payments</span>
<div style="left:845px;top:323px;width:109px;height:1px;background:#a5bce0"></div>
<div style="left:644px;top:341px;width:303px;height:179px;border:1px solid #b3c6e2;background:#eef4fb"></div>
<div style="left:646px;top:343px;width:299px;height:175px;border:1px solid #6f8bbd;background:#e9ecef"></div>
<div style="left:656px;top:352px;width:138px;height:20px;background:#fff;border:1px solid #93abd0"></div>
<div style="left:800px;top:349px;width:39px;height:24px;background:linear-gradient(#f3f6fc,#e3ebf7 50%,#d8e4f5);border:1px solid #6f88ae;border-radius:3px;"></div>
<span class="t" style="left:807.65px;top:356.10px;font-size:11.30px;color:#1b3a6a;transform:scaleX(0.9200);transform-origin:0 0;-webkit-text-stroke:0;">Save</span>
<div style="left:845px;top:349px;width:41px;height:24px;background:linear-gradient(#f3f6fc,#e3ebf7 50%,#d8e4f5);border:1px solid #6f88ae;border-radius:3px;"></div>
<span class="t" style="left:853.08px;top:356.10px;font-size:11.30px;color:#1b3a6a;transform:scaleX(0.9200);transform-origin:0 0;-webkit-text-stroke:0;">Clear</span>
<div style="left:647px;top:380px;width:297px;height:137px;background:#fff"></div>
<div style="left:647px;top:380px;width:297px;height:2px;background:#6e88b0"></div>
<div style="left:666px;top:382px;width:1px;height:115px;background:#d9e2ee"></div>
<div style="left:897px;top:382px;width:1px;height:115px;background:#d9e2ee"></div>
<div style="left:647px;top:382px;width:19px;height:23px;background:linear-gradient(#fcd592,#f9c46c)"></div>
<div style="left:647px;top:403px;width:19px;height:2px;background:#fbdfa6"></div>
<div style="left:666px;top:382px;width:231px;height:23px;background:linear-gradient(#fedc90,#fdd582 50%,#fcc86c);border-left:2px solid #dc9450;border-bottom:2px solid #dc9450;border-right:2px solid #dc9450"></div>
<div style="left:897px;top:382px;width:47px;height:23px;background:linear-gradient(#fde2a6,#f9c26a);border-bottom:2px solid #fbdfa6"></div>
<svg style="left:654px;top:388px" width="9" height="10" viewBox="0 0 9 10"><path d="M0.6 3 H2.8 L2.3 0 L7.2 4 L2.3 8 L2.8 5 H0.6 Z" fill="#15234a"/></svg>
<span class="t" style="left:670.30px;top:388.29px;font-size:11.40px;color:#1e1e1e;transform:scaleX(0.8709);transform-origin:0 0;">VISA M/C</span>
<div style="left:914px;top:387px;width:13px;height:13px;border:1px solid #2d3f5c;background:linear-gradient(#e4e8f0,#f6f8fb)"></div>
<svg style="left:916px;top:389px" width="9" height="9" viewBox="0 0 9 9"><path d="M1 4.5 L3.5 7 L8 1.5" stroke="#3a9a2a" stroke-width="1.8" fill="none"/></svg>
<div style="left:647px;top:427px;width:297px;height:1px;background:#dbe3ef"></div>
<span class="t" style="left:670.30px;top:411.29px;font-size:11.40px;color:#1e1e1e;transform:scaleX(0.8600);transform-origin:0 0;">DISCOVER</span>
<div style="left:914px;top:410px;width:13px;height:13px;border:1px solid #2d3f5c;background:linear-gradient(#e4e8f0,#f6f8fb)"></div>
<div style="left:647px;top:450px;width:297px;height:1px;background:#dbe3ef"></div>
<span class="t" style="left:670.30px;top:434.29px;font-size:11.40px;color:#1e1e1e;transform:scaleX(0.8600);transform-origin:0 0;">AMERICAN EXPRESS</span>
<div style="left:914px;top:433px;width:13px;height:13px;border:1px solid #2d3f5c;background:linear-gradient(#e4e8f0,#f6f8fb)"></div>
<div style="left:647px;top:473px;width:297px;height:1px;background:#dbe3ef"></div>
<span class="t" style="left:670.30px;top:457.29px;font-size:11.40px;color:#1e1e1e;transform:scaleX(0.8600);transform-origin:0 0;">CASH</span>
<div style="left:914px;top:456px;width:13px;height:13px;border:1px solid #2d3f5c;background:linear-gradient(#e4e8f0,#f6f8fb)"></div>
<div style="left:647px;top:496px;width:297px;height:1px;background:#dbe3ef"></div>
<span class="t" style="left:670.30px;top:480.29px;font-size:11.40px;color:#1e1e1e;transform:scaleX(0.8600);transform-origin:0 0;">CREDIT</span>
<div style="left:914px;top:479px;width:13px;height:13px;border:1px solid #2d3f5c;background:linear-gradient(#e4e8f0,#f6f8fb)"></div>
<span class="t" style="left:970.50px;top:315.79px;font-size:14.53px;font-weight:bold;color:#141414;transform:scaleX(0.8639);transform-origin:0 0;">Refered By</span>
<div style="left:1063px;top:323px;width:217px;height:1px;background:#a5bce0"></div>
<div style="left:970px;top:341px;width:297px;height:181px;border:1px solid #b3c6e2;background:#eef4fb"></div>
<div style="left:972px;top:343px;width:293px;height:177px;border:1px solid #6f8bbd;background:#e9ecef"></div>
<div style="left:982px;top:352px;width:138px;height:20px;background:#fff;border:1px solid #93abd0"></div>
<div style="left:1127px;top:349px;width:37px;height:24px;background:#dfe6ef;border:1px solid #c3d0e0;border-radius:3px;box-shadow:inset 0 0 0 1px #f2f5f9;"></div>
<span class="t" style="left:1133.50px;top:356.10px;font-size:11.30px;color:#a4acb8;transform:scaleX(0.9200);transform-origin:0 0;-webkit-text-stroke:0;">Save</span>
<div style="left:1171px;top:349px;width:41px;height:24px;background:linear-gradient(#f3f6fc,#e3ebf7 50%,#d8e4f5);border:1px solid #6f88ae;border-radius:3px;"></div>
<span class="t" style="left:1179.08px;top:356.10px;font-size:11.30px;color:#1b3a6a;transform:scaleX(0.9200);transform-origin:0 0;-webkit-text-stroke:0;">Clear</span>
<div style="left:1219px;top:349px;width:40px;height:24px;background:#dfe6ef;border:1px solid #c3d0e0;border-radius:3px;box-shadow:inset 0 0 0 1px #f2f5f9;"></div>
<span class="t" style="left:1223.77px;top:356.10px;font-size:11.30px;color:#a4acb8;transform:scaleX(0.9200);transform-origin:0 0;-webkit-text-stroke:0;">Delete</span>
<div style="left:973px;top:380px;width:291px;height:139px;background:#fff"></div>
<div style="left:973px;top:380px;width:291px;height:2px;background:#6e88b0"></div>
<div style="left:992px;top:382px;width:1px;height:115px;background:#d9e2ee"></div>
<div style="left:973px;top:382px;width:19px;height:23px;background:linear-gradient(#fcd592,#f9c46c)"></div>
<div style="left:973px;top:403px;width:19px;height:2px;background:#fbdfa6"></div>
<div style="left:992px;top:382px;width:272px;height:23px;background:linear-gradient(#fedc90,#fdd582 50%,#fcc86c);border-left:2px solid #dc9450;border-bottom:2px solid #dc9450;border-right:2px solid #dc9450"></div>
<svg style="left:980px;top:388px" width="9" height="10" viewBox="0 0 9 10"><path d="M0.6 3 H2.8 L2.3 0 L7.2 4 L2.3 8 L2.8 5 H0.6 Z" fill="#15234a"/></svg>
<span class="t" style="left:996.30px;top:388.29px;font-size:11.40px;color:#1e1e1e;transform:scaleX(0.8749);transform-origin:0 0;">FRIEND/FAMILY</span>
<div style="left:973px;top:427px;width:291px;height:1px;background:#dbe3ef"></div>
<span class="t" style="left:996.30px;top:411.29px;font-size:11.40px;color:#1e1e1e;transform:scaleX(0.8600);transform-origin:0 0;">GOOGLE</span>
<div style="left:973px;top:450px;width:291px;height:1px;background:#dbe3ef"></div>
<span class="t" style="left:996.30px;top:434.29px;font-size:11.40px;color:#1e1e1e;transform:scaleX(0.8701);transform-origin:0 0;">NEWSPAPER</span>
<div style="left:973px;top:473px;width:291px;height:1px;background:#dbe3ef"></div>
<span class="t" style="left:996.30px;top:457.29px;font-size:11.40px;color:#1e1e1e;transform:scaleX(0.8686);transform-origin:0 0;">FACEBOOK</span>
<div style="left:973px;top:496px;width:291px;height:1px;background:#dbe3ef"></div>
<span class="t" style="left:996.30px;top:480.29px;font-size:11.40px;color:#1e1e1e;transform:scaleX(0.8600);transform-origin:0 0;">YELP</span>
<span class="t" style="left:1288.50px;top:315.59px;font-size:14.53px;font-weight:bold;color:#141414;transform:scaleX(0.8750);transform-origin:0 0;">Commercial Account Terms</span>
<div style="left:1468px;top:322px;width:112px;height:1px;background:#a5bce0"></div>
<div style="left:1284px;top:341px;width:295px;height:403px;border:1px solid #b3c6e2;background:#eef4fb"></div>
<div style="left:1286px;top:343px;width:291px;height:399px;border:1px solid #6f8bbd;background:#e9ecef"></div>
<div style="left:1293px;top:352px;width:138px;height:20px;background:#fff;border:1px solid #93abd0"></div>
<div style="left:1438px;top:349px;width:38px;height:24px;background:#dfe6ef;border:1px solid #c3d0e0;border-radius:3px;box-shadow:inset 0 0 0 1px #f2f5f9;"></div>
<span class="t" style="left:1444.85px;top:356.10px;font-size:11.30px;color:#a4acb8;transform:scaleX(0.9200);transform-origin:0 0;-webkit-text-stroke:0;">Save</span>
<div style="left:1482px;top:349px;width:41px;height:24px;background:linear-gradient(#f3f6fc,#e3ebf7 50%,#d8e4f5);border:1px solid #6f88ae;border-radius:3px;"></div>
<span class="t" style="left:1490.08px;top:356.10px;font-size:11.30px;color:#1b3a6a;transform:scaleX(0.9200);transform-origin:0 0;-webkit-text-stroke:0;">Clear</span>
<div style="left:1530px;top:349px;width:41px;height:24px;background:#dfe6ef;border:1px solid #c3d0e0;border-radius:3px;box-shadow:inset 0 0 0 1px #f2f5f9;"></div>
<span class="t" style="left:1535.22px;top:356.10px;font-size:11.30px;color:#a4acb8;transform:scaleX(0.9200);transform-origin:0 0;-webkit-text-stroke:0;">Delete</span>
<div style="left:1287px;top:380px;width:289px;height:139px;background:#fff"></div>
<div style="left:1287px;top:380px;width:289px;height:2px;background:#6e88b0"></div>
<div style="left:1306px;top:382px;width:1px;height:69px;background:#d9e2ee"></div>
<div style="left:1287px;top:382px;width:19px;height:23px;background:linear-gradient(#fcd592,#f9c46c)"></div>
<div style="left:1287px;top:403px;width:19px;height:2px;background:#fbdfa6"></div>
<div style="left:1306px;top:382px;width:270px;height:23px;background:linear-gradient(#fedc90,#fdd582 50%,#fcc86c);border-left:2px solid #dc9450;border-bottom:2px solid #dc9450;border-right:2px solid #dc9450"></div>
<svg style="left:1294px;top:388px" width="9" height="10" viewBox="0 0 9 10"><path d="M0.6 3 H2.8 L2.3 0 L7.2 4 L2.3 8 L2.8 5 H0.6 Z" fill="#15234a"/></svg>
<span class="t" style="left:1310.30px;top:388.29px;font-size:11.40px;color:#1e1e1e;transform:scaleX(0.8600);transform-origin:0 0;">C.O.D.</span>
<div style="left:1287px;top:427px;width:289px;height:1px;background:#dbe3ef"></div>
<span class="t" style="left:1310.30px;top:411.29px;font-size:11.40px;color:#1e1e1e;transform:scaleX(0.8633);transform-origin:0 0;">NET 10TH</span>
<div style="left:1287px;top:450px;width:289px;height:1px;background:#dbe3ef"></div>
<span class="t" style="left:1310.30px;top:434.29px;font-size:11.40px;color:#1e1e1e;transform:scaleX(0.8756);transform-origin:0 0;">WEEKLY</span>
<div style="left:1287px;top:519px;width:289px;height:2px;background:#6e88b0"></div>
<span class="t" style="left:1328.00px;top:562.18px;font-size:12.06px;color:#222;transform:scaleX(0.9010);transform-origin:0 0;-webkit-text-stroke:0;">First Day Billing Cycle</span>
<span class="t" style="left:1348.40px;top:586.18px;font-size:12.06px;color:#222;transform:scaleX(0.9099);transform-origin:0 0;-webkit-text-stroke:0;">Late After # Days</span>
<span class="t" style="left:1380.20px;top:612.98px;font-size:12.06px;color:#222;transform:scaleX(0.8564);transform-origin:0 0;-webkit-text-stroke:0;">$ Late Fee</span>
<div style="left:1443px;top:558px;width:110px;height:20px;background:#fff;border:1px solid #9cb3d6"></div>
<div style="left:1536px;top:559px;width:16px;height:18px;background:#d3e2f6"></div>
<svg style="left:1540px;top:566px" width="7" height="4" viewBox="0 0 7 4"><path d="M0 0 H7 L3.5 4Z" fill="#2a3a5a"/></svg>
<span class="t" style="left:1447.00px;top:563.15px;font-size:11.00px;color:#222;">4</span>
<div style="left:1443px;top:581px;width:110px;height:20px;background:#fff;border:1px solid #9cb3d6"></div>
<span class="t" style="left:1543.88px;top:586.15px;font-size:11.00px;color:#222;">7</span>
<div style="left:1443px;top:608px;width:110px;height:20px;background:#fff;border:1px solid #9cb3d6"></div>
<span class="t" style="left:1523.85px;top:613.15px;font-size:11.00px;color:#222;transform:scaleX(0.9500);transform-origin:0 0;">50.00</span>
<span class="t" style="left:1607.00px;top:314.89px;font-size:14.53px;font-weight:bold;color:#141414;transform:scaleX(0.9194);transform-origin:0 0;">Vendor Term</span>
<div style="left:1702px;top:322px;width:81px;height:1px;background:#a5bce0"></div>
<div style="left:1598px;top:340px;width:202px;height:180px;border:1px solid #b3c6e2;background:#eef4fb"></div>
<div style="left:1600px;top:342px;width:198px;height:176px;border:1px solid #6f8bbd;background:#e9ecef"></div>
<div style="left:1606px;top:351px;width:129px;height:20px;background:#fff;border:1px solid #93abd0"></div>
<div style="left:1740px;top:349px;width:38px;height:23px;background:#dfe6ef;border:1px solid #c3d0e0;border-radius:3px;box-shadow:inset 0 0 0 1px #f2f5f9;"></div>
<span class="t" style="left:1746.75px;top:355.60px;font-size:11.30px;color:#a4acb8;transform:scaleX(0.9200);transform-origin:0 0;-webkit-text-stroke:0;">Save</span>
<div style="left:1601px;top:379px;width:196px;height:138px;background:#fff"></div>
<div style="left:1601px;top:379px;width:196px;height:2px;background:#6e88b0"></div>
<div style="left:1620px;top:381px;width:1px;height:136px;background:#d9e2ee"></div>
<div style="left:1601px;top:381px;width:19px;height:23px;background:linear-gradient(#fcd592,#f9c46c)"></div>
<div style="left:1601px;top:402px;width:19px;height:2px;background:#fbdfa6"></div>
<div style="left:1620px;top:381px;width:177px;height:23px;background:linear-gradient(#fedc90,#fdd582 50%,#fcc86c);border-left:2px solid #dc9450;border-bottom:2px solid #dc9450"></div>
<svg style="left:1608px;top:387px" width="9" height="10" viewBox="0 0 9 10"><path d="M0.6 3 H2.8 L2.3 0 L7.2 4 L2.3 8 L2.8 5 H0.6 Z" fill="#15234a"/></svg>
<span class="t" style="left:1624.30px;top:387.29px;font-size:11.40px;color:#1e1e1e;transform:scaleX(0.8600);transform-origin:0 0;">COD</span>
<div style="left:1601px;top:426px;width:196px;height:1px;background:#dbe3ef"></div>
<span class="t" style="left:1624.30px;top:410.29px;font-size:11.40px;color:#1e1e1e;transform:scaleX(0.8633);transform-origin:0 0;">NET 10TH</span>
<div style="left:1601px;top:449px;width:196px;height:1px;background:#dbe3ef"></div>
<span class="t" style="left:1624.30px;top:433.29px;font-size:11.40px;color:#1e1e1e;transform:scaleX(0.8756);transform-origin:0 0;">WEEKLY</span>
<div style="left:1601px;top:472px;width:196px;height:1px;background:#dbe3ef"></div>
<span class="t" style="left:1624.30px;top:456.29px;font-size:11.40px;color:#1e1e1e;transform:scaleX(0.8623);transform-origin:0 0;">CREDIT CARD</span>
<div style="left:1601px;top:495px;width:196px;height:1px;background:#dbe3ef"></div>
<span class="t" style="left:1624.30px;top:479.29px;font-size:11.40px;color:#1e1e1e;transform:scaleX(0.8600);transform-origin:0 0;">CHECK</span>
<div style="left:1601px;top:518px;width:196px;height:1px;background:#dbe3ef"></div>
<span class="t" style="left:1624.30px;top:502.29px;font-size:11.40px;color:#1e1e1e;transform:scaleX(0.8650);transform-origin:0 0;">VENDOR ACCOUNT</span>
<span class="t" style="left:642.00px;top:544.09px;font-size:14.53px;font-weight:bold;color:#141414;transform:scaleX(0.9170);transform-origin:0 0;">Vendor Type</span>
<div style="left:737px;top:549px;width:215px;height:1px;background:#a5bce0"></div>
<div style="left:649px;top:565px;width:305px;height:181px;border:1px solid #b3c6e2;background:#eef4fb"></div>
<div style="left:651px;top:567px;width:301px;height:177px;border:1px solid #6f8bbd;background:#e9ecef"></div>
<div style="left:661px;top:576px;width:138px;height:20px;background:#fff;border:1px solid #93abd0"></div>
<div style="left:805px;top:573px;width:38px;height:24px;background:#dfe6ef;border:1px solid #c3d0e0;border-radius:3px;box-shadow:inset 0 0 0 1px #f2f5f9;"></div>
<span class="t" style="left:812.15px;top:580.10px;font-size:11.30px;color:#a4acb8;transform:scaleX(0.9200);transform-origin:0 0;-webkit-text-stroke:0;">Save</span>
<div style="left:850px;top:573px;width:40px;height:24px;background:linear-gradient(#f3f6fc,#e3ebf7 50%,#d8e4f5);border:1px solid #6f88ae;border-radius:3px;"></div>
<span class="t" style="left:857.58px;top:580.10px;font-size:11.30px;color:#1b3a6a;transform:scaleX(0.9200);transform-origin:0 0;-webkit-text-stroke:0;">Clear</span>
<div style="left:897px;top:573px;width:42px;height:24px;background:#dfe6ef;border:1px solid #c3d0e0;border-radius:3px;box-shadow:inset 0 0 0 1px #f2f5f9;"></div>
<span class="t" style="left:902.97px;top:580.10px;font-size:11.30px;color:#a4acb8;transform:scaleX(0.9200);transform-origin:0 0;-webkit-text-stroke:0;">Delete</span>
<div style="left:652px;top:604px;width:299px;height:139px;background:#fff"></div>
<div style="left:652px;top:604px;width:299px;height:2px;background:#6e88b0"></div>
<div style="left:671px;top:606px;width:1px;height:115px;background:#d9e2ee"></div>
<div style="left:652px;top:606px;width:19px;height:23px;background:linear-gradient(#fcd592,#f9c46c)"></div>
<div style="left:652px;top:627px;width:19px;height:2px;background:#fbdfa6"></div>
<div style="left:671px;top:606px;width:280px;height:23px;background:linear-gradient(#fedc90,#fdd582 50%,#fcc86c);border-left:2px solid #dc9450;border-bottom:2px solid #dc9450;border-right:2px solid #dc9450"></div>
<svg style="left:659px;top:612px" width="9" height="10" viewBox="0 0 9 10"><path d="M0.6 3 H2.8 L2.3 0 L7.2 4 L2.3 8 L2.8 5 H0.6 Z" fill="#15234a"/></svg>
<span class="t" style="left:675.30px;top:612.29px;font-size:11.40px;color:#1e1e1e;transform:scaleX(0.8658);transform-origin:0 0;">AFTERMARKET PARTS PROVIDER</span>
<div style="left:652px;top:651px;width:299px;height:1px;background:#dbe3ef"></div>
<span class="t" style="left:675.30px;top:635.29px;font-size:11.40px;color:#1e1e1e;transform:scaleX(0.8664);transform-origin:0 0;">ORIGINAL EQUIPMENT PARTS PROVIDER</span>
<div style="left:652px;top:674px;width:299px;height:1px;background:#dbe3ef"></div>
<span class="t" style="left:675.30px;top:658.29px;font-size:11.40px;color:#1e1e1e;transform:scaleX(0.8617);transform-origin:0 0;">TIRE DISTRIBUTOR</span>
<div style="left:652px;top:697px;width:299px;height:1px;background:#dbe3ef"></div>
<span class="t" style="left:675.30px;top:681.29px;font-size:11.40px;color:#1e1e1e;transform:scaleX(0.8616);transform-origin:0 0;">SERVICE PROVIDER</span>
<div style="left:652px;top:720px;width:299px;height:1px;background:#dbe3ef"></div>
<span class="t" style="left:675.30px;top:704.29px;font-size:11.40px;color:#1e1e1e;transform:scaleX(0.8634);transform-origin:0 0;">GENERAL VENDOR</span>
<span class="t" style="left:977.00px;top:541.39px;font-size:14.53px;font-weight:bold;color:#141414;transform:scaleX(0.8880);transform-origin:0 0;">Work Order Status</span>
<div style="left:1097px;top:549px;width:175px;height:1px;background:#a5bce0"></div>
<div style="left:977px;top:565px;width:291px;height:181px;border:1px solid #b3c6e2;background:#eef4fb"></div>
<div style="left:979px;top:567px;width:287px;height:177px;border:1px solid #6f8bbd;background:#e9ecef"></div>
<div style="left:983px;top:576px;width:138px;height:20px;background:#fff;border:1px solid #93abd0"></div>
<div style="left:1127px;top:573px;width:39px;height:24px;background:#dfe6ef;border:1px solid #c3d0e0;border-radius:3px;box-shadow:inset 0 0 0 1px #f2f5f9;"></div>
<span class="t" style="left:1134.65px;top:580.10px;font-size:11.30px;color:#a4acb8;transform:scaleX(0.9200);transform-origin:0 0;-webkit-text-stroke:0;">Save</span>
<div style="left:1172px;top:573px;width:41px;height:24px;background:linear-gradient(#f3f6fc,#e3ebf7 50%,#d8e4f5);border:1px solid #6f88ae;border-radius:3px;"></div>
<span class="t" style="left:1180.08px;top:580.10px;font-size:11.30px;color:#1b3a6a;transform:scaleX(0.9200);transform-origin:0 0;-webkit-text-stroke:0;">Clear</span>
<div style="left:1219px;top:573px;width:42px;height:24px;background:#dfe6ef;border:1px solid #c3d0e0;border-radius:3px;box-shadow:inset 0 0 0 1px #f2f5f9;"></div>
<span class="t" style="left:1224.97px;top:580.10px;font-size:11.30px;color:#a4acb8;transform:scaleX(0.9200);transform-origin:0 0;-webkit-text-stroke:0;">Delete</span>
<div style="left:980px;top:604px;width:285px;height:139px;background:#fff"></div>
<div style="left:980px;top:604px;width:285px;height:2px;background:#6e88b0"></div>
<div style="left:999px;top:606px;width:1px;height:137px;background:#d9e2ee"></div>
<div style="left:980px;top:606px;width:19px;height:23px;background:linear-gradient(#fcd592,#f9c46c)"></div>
<div style="left:980px;top:627px;width:19px;height:2px;background:#fbdfa6"></div>
<div style="left:999px;top:606px;width:248px;height:23px;background:linear-gradient(#fedc90,#fdd582 50%,#fcc86c);border-left:2px solid #dc9450;border-bottom:2px solid #dc9450"></div>
<svg style="left:987px;top:612px" width="9" height="10" viewBox="0 0 9 10"><path d="M0.6 3 H2.8 L2.3 0 L7.2 4 L2.3 8 L2.8 5 H0.6 Z" fill="#15234a"/></svg>
<span class="t" style="left:1003.30px;top:612.29px;font-size:11.40px;color:#1e1e1e;transform:scaleX(0.8600);transform-origin:0 0;">IN PROGRESS</span>
<div style="left:980px;top:651px;width:267px;height:1px;background:#dbe3ef"></div>
<span class="t" style="left:1003.30px;top:635.29px;font-size:11.40px;color:#1e1e1e;transform:scaleX(0.8714);transform-origin:0 0;">WAITING AUTHORIZATION</span>
<div style="left:980px;top:674px;width:267px;height:1px;background:#dbe3ef"></div>
<span class="t" style="left:1003.30px;top:658.29px;font-size:11.40px;color:#1e1e1e;transform:scaleX(0.8600);transform-origin:0 0;">FINISH</span>
<div style="left:980px;top:697px;width:267px;height:1px;background:#dbe3ef"></div>
<span class="t" style="left:1003.30px;top:681.29px;font-size:11.40px;color:#1e1e1e;transform:scaleX(0.8710);transform-origin:0 0;">WAITING FOR PARTS</span>
<div style="left:980px;top:720px;width:267px;height:1px;background:#dbe3ef"></div>
<span class="t" style="left:1003.30px;top:704.29px;font-size:11.40px;color:#1e1e1e;transform:scaleX(0.8736);transform-origin:0 0;">IN DETAIL</span>
<div style="left:980px;top:743px;width:267px;height:1px;background:#dbe3ef"></div>
<span class="t" style="left:1003.30px;top:727.29px;font-size:11.40px;color:#1e1e1e;transform:scaleX(0.8600);transform-origin:0 0;">CLOSED</span>
<div style="left:1247px;top:606px;width:18px;height:137px;background:#d3e0f2"></div>
<svg style="left:1251px;top:612px" width="10" height="6" viewBox="0 0 10 6"><path d="M0.5 5.5 L5 0.5 L9.5 5.5Z" fill="#1c2a50"/></svg>
<svg style="left:1251px;top:732px" width="10" height="6" viewBox="0 0 10 6"><path d="M0.5 0.5 L5 5.5 L9.5 0.5Z" fill="#1c2a50"/></svg>
<div style="left:1248px;top:624px;width:16px;height:76px;background:linear-gradient(90deg,#f2f6fb,#dbe6f4);border:1px solid #a3b9d9;border-radius:3px"></div>
<div style="left:1252px;top:660px;width:8px;height:1px;background:#8ea4c4"></div>
<div style="left:1252px;top:662px;width:8px;height:1px;background:#8ea4c4"></div>
<div style="left:1252px;top:664px;width:8px;height:1px;background:#8ea4c4"></div>
<span class="t" style="left:1595.00px;top:539.59px;font-size:14.53px;font-weight:bold;color:#141414;transform:scaleX(0.8630);transform-origin:0 0;">User Group</span>
<div style="left:1670px;top:548px;width:113px;height:1px;background:#a5bce0"></div>
<div style="left:1598px;top:558px;width:202px;height:181px;border:1px solid #b3c6e2;background:#eef4fb"></div>
<div style="left:1600px;top:560px;width:198px;height:177px;border:1px solid #6f8bbd;background:#e9ecef"></div>
<div style="left:1606px;top:569px;width:129px;height:19px;background:#fff;border:1px solid #93abd0"></div>
<div style="left:1739px;top:566px;width:38px;height:23px;background:#dfe6ef;border:1px solid #c3d0e0;border-radius:3px;box-shadow:inset 0 0 0 1px #f2f5f9;"></div>
<span class="t" style="left:1746.15px;top:572.60px;font-size:11.30px;color:#a4acb8;transform:scaleX(0.9200);transform-origin:0 0;-webkit-text-stroke:0;">Save</span>
<div style="left:1601px;top:597px;width:196px;height:139px;background:#fff"></div>
<div style="left:1601px;top:597px;width:196px;height:2px;background:#6e88b0"></div>
<div style="left:1620px;top:599px;width:1px;height:137px;background:#d9e2ee"></div>
<div style="left:1601px;top:599px;width:19px;height:23px;background:linear-gradient(#fcd592,#f9c46c)"></div>
<div style="left:1601px;top:620px;width:19px;height:2px;background:#fbdfa6"></div>
<div style="left:1620px;top:599px;width:177px;height:23px;background:linear-gradient(#fedc90,#fdd582 50%,#fcc86c);border-left:2px solid #dc9450;border-bottom:2px solid #dc9450"></div>
<svg style="left:1608px;top:605px" width="9" height="10" viewBox="0 0 9 10"><path d="M0.6 3 H2.8 L2.3 0 L7.2 4 L2.3 8 L2.8 5 H0.6 Z" fill="#15234a"/></svg>
<span class="t" style="left:1624.30px;top:605.29px;font-size:11.40px;color:#1e1e1e;transform:scaleX(1.0054);transform-origin:0 0;">Technician</span>
<div style="left:1601px;top:644px;width:196px;height:1px;background:#dbe3ef"></div>
<span class="t" style="left:1624.30px;top:628.29px;font-size:11.40px;color:#1e1e1e;transform:scaleX(0.9671);transform-origin:0 0;">Admin</span>
<div style="left:1601px;top:667px;width:196px;height:1px;background:#dbe3ef"></div>
<span class="t" style="left:1624.30px;top:651.29px;font-size:11.40px;color:#1e1e1e;transform:scaleX(0.9753);transform-origin:0 0;">Tow Truck Driver</span>
<div style="left:1601px;top:690px;width:196px;height:1px;background:#dbe3ef"></div>
<span class="t" style="left:1624.30px;top:674.29px;font-size:11.40px;color:#1e1e1e;transform:scaleX(0.8619);transform-origin:0 0;">SHOP FOREMAN</span>
<div style="left:1601px;top:713px;width:196px;height:1px;background:#dbe3ef"></div>
<span class="t" style="left:1624.30px;top:697.29px;font-size:11.40px;color:#1e1e1e;transform:scaleX(0.8600);transform-origin:0 0;">BOOKKEEPER</span>
<div style="left:1601px;top:736px;width:196px;height:1px;background:#dbe3ef"></div>
<span class="t" style="left:1624.30px;top:720.29px;font-size:11.40px;color:#1e1e1e;transform:scaleX(0.8618);transform-origin:0 0;">SERVICE_WRITER</span>
<span class="t" style="left:642.60px;top:768.59px;font-size:14.53px;font-weight:bold;color:#141414;transform:scaleX(0.8348);transform-origin:0 0;">Specialties</span>
<div style="left:718px;top:776px;width:234px;height:1px;background:#a5bce0"></div>
<div style="left:649px;top:791px;width:305px;height:209px;border:1px solid #b3c6e2;background:#eef4fb"></div>
<div style="left:651px;top:793px;width:301px;height:205px;border:1px solid #6f8bbd;background:#e9ecef"></div>
<div style="left:661px;top:802px;width:138px;height:20px;background:#fff;border:1px solid #93abd0"></div>
<div style="left:806px;top:799px;width:37px;height:24px;background:#dfe6ef;border:1px solid #c3d0e0;border-radius:3px;box-shadow:inset 0 0 0 1px #f2f5f9;"></div>
<span class="t" style="left:812.65px;top:806.10px;font-size:11.30px;color:#a4acb8;transform:scaleX(0.9200);transform-origin:0 0;-webkit-text-stroke:0;">Save</span>
<div style="left:850px;top:799px;width:41px;height:24px;background:linear-gradient(#f3f6fc,#e3ebf7 50%,#d8e4f5);border:1px solid #6f88ae;border-radius:3px;"></div>
<span class="t" style="left:858.08px;top:806.10px;font-size:11.30px;color:#1b3a6a;transform:scaleX(0.9200);transform-origin:0 0;-webkit-text-stroke:0;">Clear</span>
<div style="left:898px;top:799px;width:40px;height:24px;background:#dfe6ef;border:1px solid #c3d0e0;border-radius:3px;box-shadow:inset 0 0 0 1px #f2f5f9;"></div>
<span class="t" style="left:902.97px;top:806.10px;font-size:11.30px;color:#a4acb8;transform:scaleX(0.9200);transform-origin:0 0;-webkit-text-stroke:0;">Delete</span>
<div style="left:652px;top:829px;width:299px;height:168px;background:#fff"></div>
<div style="left:652px;top:829px;width:299px;height:2px;background:#6e88b0"></div>
<div style="left:671px;top:831px;width:1px;height:138px;background:#d9e2ee"></div>
<div style="left:652px;top:831px;width:19px;height:23px;background:linear-gradient(#fcd592,#f9c46c)"></div>
<div style="left:652px;top:852px;width:19px;height:2px;background:#fbdfa6"></div>
<div style="left:671px;top:831px;width:263px;height:23px;background:linear-gradient(#fedc90,#fdd582 50%,#fcc86c);border-left:2px solid #dc9450;border-bottom:2px solid #dc9450"></div>
<svg style="left:659px;top:837px" width="9" height="10" viewBox="0 0 9 10"><path d="M0.6 3 H2.8 L2.3 0 L7.2 4 L2.3 8 L2.8 5 H0.6 Z" fill="#15234a"/></svg>
<span class="t" style="left:675.30px;top:837.29px;font-size:11.40px;color:#1e1e1e;transform:scaleX(0.8718);transform-origin:0 0;">SPECIALTY</span>
<div style="left:652px;top:876px;width:282px;height:1px;background:#dbe3ef"></div>
<span class="t" style="left:675.30px;top:860.29px;font-size:11.40px;color:#1e1e1e;transform:scaleX(0.8600);transform-origin:0 0;">AFTERMARKET</span>
<div style="left:652px;top:899px;width:282px;height:1px;background:#dbe3ef"></div>
<span class="t" style="left:675.30px;top:883.29px;font-size:11.40px;color:#1e1e1e;transform:scaleX(0.8600);transform-origin:0 0;">MERCEDES</span>
<div style="left:652px;top:922px;width:282px;height:1px;background:#dbe3ef"></div>
<span class="t" style="left:675.30px;top:906.29px;font-size:11.40px;color:#1e1e1e;transform:scaleX(0.8600);transform-origin:0 0;">EXAUST</span>
<div style="left:652px;top:945px;width:282px;height:1px;background:#dbe3ef"></div>
<span class="t" style="left:675.30px;top:929.29px;font-size:11.40px;color:#1e1e1e;transform:scaleX(0.8600);transform-origin:0 0;">GM</span>
<div style="left:652px;top:968px;width:282px;height:1px;background:#dbe3ef"></div>
<div style="left:934px;top:831px;width:17px;height:166px;background:#d3e0f2"></div>
<svg style="left:938px;top:837px" width="10" height="6" viewBox="0 0 10 6"><path d="M0.5 5.5 L5 0.5 L9.5 5.5Z" fill="#1c2a50"/></svg>
<svg style="left:938px;top:986px" width="10" height="6" viewBox="0 0 10 6"><path d="M0.5 0.5 L5 5.5 L9.5 0.5Z" fill="#1c2a50"/></svg>
<div style="left:935px;top:849px;width:15px;height:17px;background:linear-gradient(90deg,#f2f6fb,#dbe6f4);border:1px solid #a3b9d9;border-radius:3px"></div>
<div style="left:939px;top:855px;width:7px;height:1px;background:#8ea4c4"></div>
<div style="left:939px;top:857px;width:7px;height:1px;background:#8ea4c4"></div>
<div style="left:939px;top:859px;width:7px;height:1px;background:#8ea4c4"></div>
<span class="t" style="left:983.30px;top:764.09px;font-size:14.53px;font-weight:bold;color:#141414;transform:scaleX(0.8863);transform-origin:0 0;">Content PlaceHolder</span>
<div style="left:1117px;top:771px;width:148px;height:1px;background:#a5bce0"></div>
<div style="left:980px;top:789px;width:290px;height:211px;border:1px solid #b3c6e2;background:#eef4fb"></div>
<div style="left:982px;top:791px;width:286px;height:207px;border:1px solid #6f8bbd;background:#e9ecef"></div>
<div style="left:990px;top:801px;width:138px;height:20px;background:#fff;border:1px solid #93abd0"></div>
<div style="left:1132px;top:799px;width:39px;height:23px;background:#dfe6ef;border:1px solid #c3d0e0;border-radius:3px;box-shadow:inset 0 0 0 1px #f2f5f9;"></div>
<span class="t" style="left:1139.65px;top:805.60px;font-size:11.30px;color:#a4acb8;transform:scaleX(0.9200);transform-origin:0 0;-webkit-text-stroke:0;">Save</span>
<div style="left:1177px;top:799px;width:41px;height:23px;background:linear-gradient(#f3f6fc,#e3ebf7 50%,#d8e4f5);border:1px solid #6f88ae;border-radius:3px;"></div>
<span class="t" style="left:1185.08px;top:805.60px;font-size:11.30px;color:#1b3a6a;transform:scaleX(0.9200);transform-origin:0 0;-webkit-text-stroke:0;">Clear</span>
<div style="left:1222px;top:799px;width:42px;height:23px;background:#dfe6ef;border:1px solid #c3d0e0;border-radius:3px;box-shadow:inset 0 0 0 1px #f2f5f9;"></div>
<span class="t" style="left:1228.12px;top:805.60px;font-size:11.30px;color:#a4acb8;transform:scaleX(0.9200);transform-origin:0 0;-webkit-text-stroke:0;">Delete</span>
<div style="left:983px;top:828px;width:284px;height:169px;background:#fff"></div>
<div style="left:983px;top:828px;width:284px;height:2px;background:#6e88b0"></div>
<div style="left:1002px;top:830px;width:1px;height:69px;background:#d9e2ee"></div>
<div style="left:983px;top:830px;width:19px;height:23px;background:linear-gradient(#fcd592,#f9c46c)"></div>
<div style="left:983px;top:851px;width:19px;height:2px;background:#fbdfa6"></div>
<div style="left:1002px;top:830px;width:265px;height:23px;background:linear-gradient(#fedc90,#fdd582 50%,#fcc86c);border-left:2px solid #dc9450;border-bottom:2px solid #dc9450;border-right:2px solid #dc9450"></div>
<svg style="left:990px;top:836px" width="9" height="10" viewBox="0 0 9 10"><path d="M0.6 3 H2.8 L2.3 0 L7.2 4 L2.3 8 L2.8 5 H0.6 Z" fill="#15234a"/></svg>
<span class="t" style="left:1006.30px;top:836.29px;font-size:11.40px;color:#1e1e1e;transform:scaleX(0.8600);transform-origin:0 0;">IIIUPP</span>
<div style="left:983px;top:875px;width:284px;height:1px;background:#dbe3ef"></div>
<span class="t" style="left:1006.30px;top:859.29px;font-size:11.40px;color:#1e1e1e;transform:scaleX(0.8600);transform-origin:0 0;">NNN2</span>
<div style="left:983px;top:898px;width:284px;height:1px;background:#dbe3ef"></div>
<span class="t" style="left:1006.30px;top:882.29px;font-size:11.40px;color:#1e1e1e;transform:scaleX(0.8600);transform-origin:0 0;">SADFS</span>
<span class="t" style="left:1290.00px;top:761.09px;font-size:14.53px;font-weight:bold;color:#141414;transform:scaleX(0.8804);transform-origin:0 0;">Bank/Cash Drawer/Credit Card Accounts</span>
<div style="left:1547px;top:770px;width:33px;height:1px;background:#a5bce0"></div>
<div style="left:1292px;top:789px;width:290px;height:211px;border:1px solid #b3c6e2;background:#eef4fb"></div>
<div style="left:1294px;top:791px;width:286px;height:207px;border:1px solid #6f8bbd;background:#e9ecef"></div>
<div style="left:1302px;top:801px;width:138px;height:20px;background:#fff;border:1px solid #93abd0"></div>
<div style="left:1444px;top:799px;width:39px;height:23px;background:#dfe6ef;border:1px solid #c3d0e0;border-radius:3px;box-shadow:inset 0 0 0 1px #f2f5f9;"></div>
<span class="t" style="left:1451.50px;top:805.60px;font-size:11.30px;color:#a4acb8;transform:scaleX(0.9200);transform-origin:0 0;-webkit-text-stroke:0;">Save</span>
<div style="left:1489px;top:799px;width:41px;height:23px;background:linear-gradient(#f3f6fc,#e3ebf7 50%,#d8e4f5);border:1px solid #6f88ae;border-radius:3px;"></div>
<span class="t" style="left:1497.08px;top:805.60px;font-size:11.30px;color:#1b3a6a;transform:scaleX(0.9200);transform-origin:0 0;-webkit-text-stroke:0;">Clear</span>
<div style="left:1534px;top:799px;width:42px;height:23px;background:#dfe6ef;border:1px solid #c3d0e0;border-radius:3px;box-shadow:inset 0 0 0 1px #f2f5f9;"></div>
<span class="t" style="left:1539.97px;top:805.60px;font-size:11.30px;color:#a4acb8;transform:scaleX(0.9200);transform-origin:0 0;-webkit-text-stroke:0;">Delete</span>
<div style="left:1295px;top:828px;width:284px;height:169px;background:#fff"></div>
<div style="left:1295px;top:828px;width:284px;height:2px;background:#6e88b0"></div>
<div style="left:1314px;top:830px;width:1px;height:46px;background:#d9e2ee"></div>
<div style="left:1295px;top:830px;width:19px;height:23px;background:linear-gradient(#fcd592,#f9c46c)"></div>
<div style="left:1295px;top:851px;width:19px;height:2px;background:#fbdfa6"></div>
<div style="left:1314px;top:830px;width:265px;height:23px;background:linear-gradient(#fedc90,#fdd582 50%,#fcc86c);border-left:2px solid #dc9450;border-bottom:2px solid #dc9450;border-right:2px solid #dc9450"></div>
<svg style="left:1302px;top:836px" width="9" height="10" viewBox="0 0 9 10"><path d="M0.6 3 H2.8 L2.3 0 L7.2 4 L2.3 8 L2.8 5 H0.6 Z" fill="#15234a"/></svg>
<span class="t" style="left:1318.30px;top:836.29px;font-size:11.40px;color:#1e1e1e;transform:scaleX(0.8600);transform-origin:0 0;">A_TYPE</span>
<div style="left:1295px;top:875px;width:284px;height:1px;background:#dbe3ef"></div>
<span class="t" style="left:1318.30px;top:859.29px;font-size:11.40px;color:#1e1e1e;transform:scaleX(0.8623);transform-origin:0 0;">CREDIT CARD</span>
</div></body></html>
